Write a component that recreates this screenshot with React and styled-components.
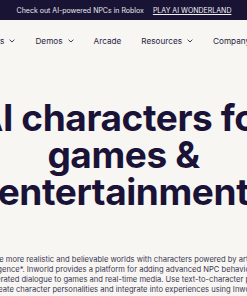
import React from 'react';
import styled, { createGlobalStyle } from 'styled-components';

const GlobalStyle = createGlobalStyle`
  html, body {
    margin: 0;
    padding: 0;
    background: #f7f6f3;
    overflow: hidden;
  }
  body {
    font-family: Inter, 'Liberation Sans', sans-serif;
    color: #1b1535;
  }
`;

const Page = styled.div`
  width: 1000px;
  margin-left: calc(50% - 500px);
`;

const Banner = styled.div`
  height: 20px;
  background: #1a1434;
  display: flex;
  align-items: center;
  justify-content: center;
  gap: 9px;
  padding-left: 1px;
  font-size: 7px;
  color: #e9e7f0;
`;

const BannerLink = styled.a`
  color: #f2f0f7;
  text-decoration: underline;
  text-underline-offset: 1px;
`;

const Nav = styled.nav`
  height: 42px;
  display: flex;
  align-items: center;
  justify-content: center;
  gap: 20px;
  padding-right: 16px;
  font-size: 8.2px;
  color: #2a2443;
`;

const NavItem = styled.div`
  display: flex;
  align-items: center;
  gap: 5px;
  white-space: nowrap;
`;

const Chevron = () => (
  <svg width="6" height="4" viewBox="0 0 6 4" fill="none">
    <path d="M0.6 0.7 L3 3 L5.4 0.7" stroke="#2a2443" strokeWidth="0.9" />
  </svg>
);

const Hero = styled.section`
  padding-top: 37px;
  text-align: center;
`;

const Title = styled.h1`
  margin: 0;
  font-size: 37px;
  line-height: 37px;
  font-weight: 700;
  letter-spacing: -0.4px;
  color: #1a1337;
`;

const Line = styled.span`
  display: block;
  white-space: nowrap;
`;

const Lead = styled.p`
  margin: 45px 0 0;
  font-size: 7.6px;
  line-height: 10px;
  color: #3b3652;
`;

const navItems = [
  { label: 'Products', menu: true },
  { label: 'Demos', menu: true },
  { label: 'Arcade', menu: false },
  { label: 'Resources', menu: true },
  { label: 'Company', menu: true },
];

const leadLines = [
  'Create more realistic and believable worlds with characters powered by artificial',
  'intelligence*. Inworld provides a platform for adding advanced NPC behavior and',
  'AI-generated dialogue to games and real-time media. Use text-to-character prompts',
  'to create character personalities and integrate into experiences using Inworld’s',
  'SDKs.',
];

const App = () => (
  <Page>
    <GlobalStyle />
    <Banner>
      <span>Check out AI-powered NPCs in Roblox</span>
      <BannerLink>PLAY AI WONDERLAND</BannerLink>
    </Banner>
    <Nav>
      {navItems.map((item) => (
        <NavItem key={item.label}>
          {item.label}
          {item.menu && <Chevron />}
        </NavItem>
      ))}
    </Nav>
    <Hero>
      <Title>
        <Line>AI characters for</Line>
        <Line>games &amp;</Line>
        <Line>entertainment</Line>
      </Title>
      <Lead>
        {leadLines.map((l) => (
          <Line key={l}>{l}</Line>
        ))}
      </Lead>
    </Hero>
  </Page>
);

export default App;
